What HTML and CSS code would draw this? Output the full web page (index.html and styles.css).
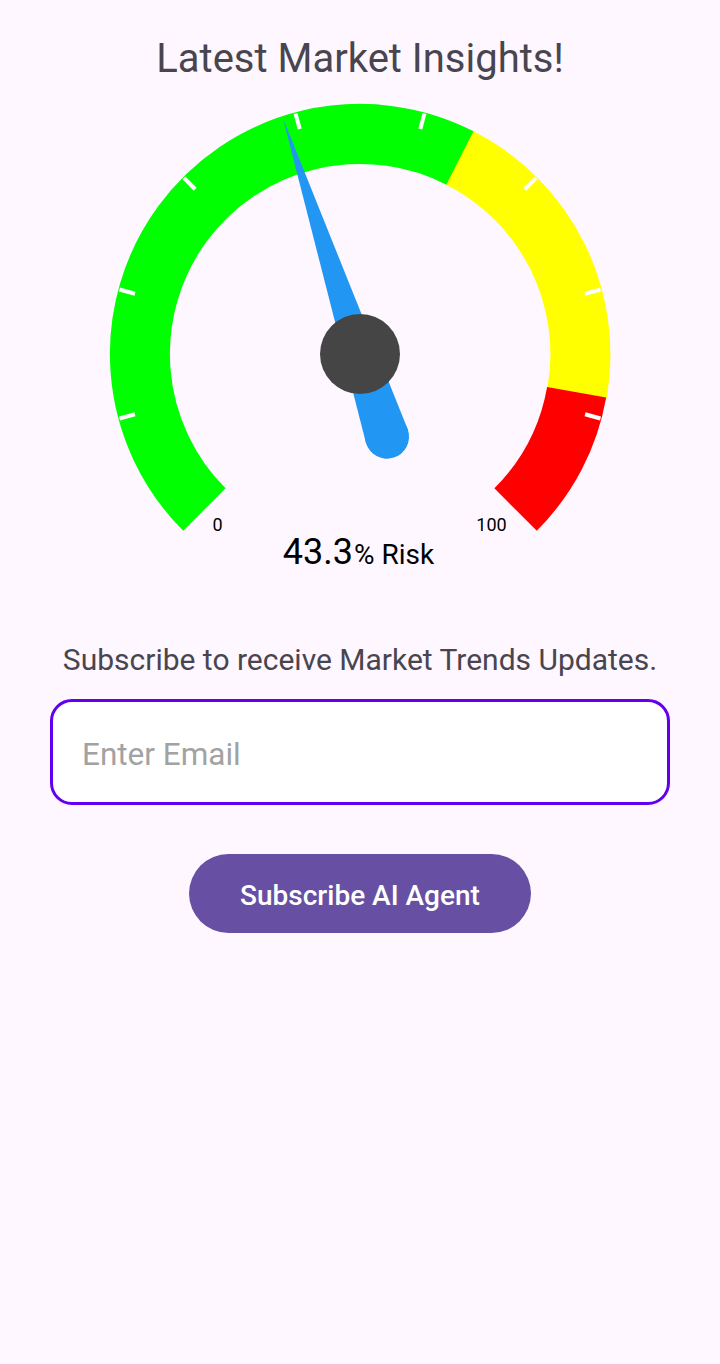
FILE: index.html
```html
<!DOCTYPE html>
<html lang="en">
<head>
<meta charset="utf-8">
<title>Latest Market Insights</title>
<link rel="stylesheet" href="styles.css">
</head>
<body>
<main class="page">
  <h1 class="title">Latest Market Insights!</h1>
  <svg class="gauge" width="720" height="448" viewBox="0 0 720 448" aria-label="Risk gauge">
    <g fill="none" stroke-width="60" stroke-linecap="butt">
      <path d="M204.44 426.56 A220 220 0 0 1 460.8 75.4" stroke="#00FF00"/>
      <path d="M459.88 74.98 A220 220 0 0 1 576.9 310.3" stroke="#FFFF00"/>
      <path d="M576.66 309.20 A220 220 0 0 1 515.56 426.56" stroke="#FF0000"/>
    </g>
    <g stroke="#FFFFFF" stroke-width="4">
      <line x1="360" y1="22" x2="360" y2="38" transform="rotate(-105 360 271)"/>
      <line x1="360" y1="22" x2="360" y2="38" transform="rotate(-75 360 271)"/>
      <line x1="360" y1="22" x2="360" y2="38" transform="rotate(-45 360 271)"/>
      <line x1="360" y1="22" x2="360" y2="38" transform="rotate(-15 360 271)"/>
      <line x1="360" y1="22" x2="360" y2="38" transform="rotate(15 360 271)"/>
      <line x1="360" y1="22" x2="360" y2="38" transform="rotate(45 360 271)"/>
      <line x1="360" y1="22" x2="360" y2="38" transform="rotate(75 360 271)"/>
      <line x1="360" y1="22" x2="360" y2="38" transform="rotate(105 360 271)"/>
    </g>
    <g fill="#2196F3" transform="rotate(-18.09 360 271)">
      <polygon points="360,23 382,358 338,358"/>
      <circle cx="360" cy="358" r="22"/>
    </g>
    <circle cx="360" cy="271" r="40" fill="#454545"/>
    <text class="scale-label" x="217.5" y="448" text-anchor="middle">0</text>
    <text class="scale-label" x="491.5" y="448" text-anchor="middle">100</text>
  </svg>
  <div class="value"><span class="value-num">43.3</span><span class="value-unit">% Risk</span></div>
  <p class="subscribe-text">Subscribe to receive Market Trends Updates.</p>
  <div class="email-field"><span class="placeholder">Enter Email</span></div>
  <button class="subscribe-btn" type="button">Subscribe AI Agent</button>
</main>
</body>
</html>
```

FILE: styles.css
```css
html, body {
  margin: 0;
  padding: 0;
  background: #FEF7FF;
}

body {
  font-family: Roboto, "Noto Sans", "Liberation Sans", sans-serif;
  min-height: 1364px;
}

.page {
  display: flex;
  flex-direction: column;
  align-items: center;
  padding-top: 35px;
}

.title {
  margin: 0;
  font-size: 40px;
  line-height: 48px;
  font-weight: 400;
  color: #49454F;
}

.gauge {
  display: block;
  overflow: visible;
}

.scale-label {
  font-family: Roboto, "Liberation Sans", sans-serif;
  font-size: 18px;
  fill: #000000;
}

.value {
  font-size: 36px;
  line-height: 42px;
  color: #000000;
  white-space: nowrap;
  margin-right: 3px;
}

.value-num {
  font-size: 36px;
}

.value-unit {
  font-size: 28px;
  line-height: 1;
  margin-left: 1px;
}

.subscribe-text {
  margin: 67px 0 0;
  font-size: 30px;
  line-height: 40px;
  color: #49454F;
}

.email-field {
  box-sizing: border-box;
  margin-top: 19px;
  width: 620px;
  height: 106px;
  border: 3px solid #6200EE;
  border-radius: 22px;
  background: #FFFFFF;
  display: flex;
  align-items: center;
  padding: 4px 0 0 29px;
}

.placeholder {
  font-size: 31.5px;
  color: #A2A2A2;
}

.subscribe-btn {
  box-sizing: border-box;
  margin-top: 49px;
  width: 342px;
  height: 79px;
  border: none;
  border-radius: 40px;
  background: #6750A4;
  color: #FFFFFF;
  font-family: Roboto, "Noto Sans", "Liberation Sans", sans-serif;
  font-size: 28px;
  font-weight: 500;
  padding: 4px 0 0;
  cursor: pointer;
}
```
